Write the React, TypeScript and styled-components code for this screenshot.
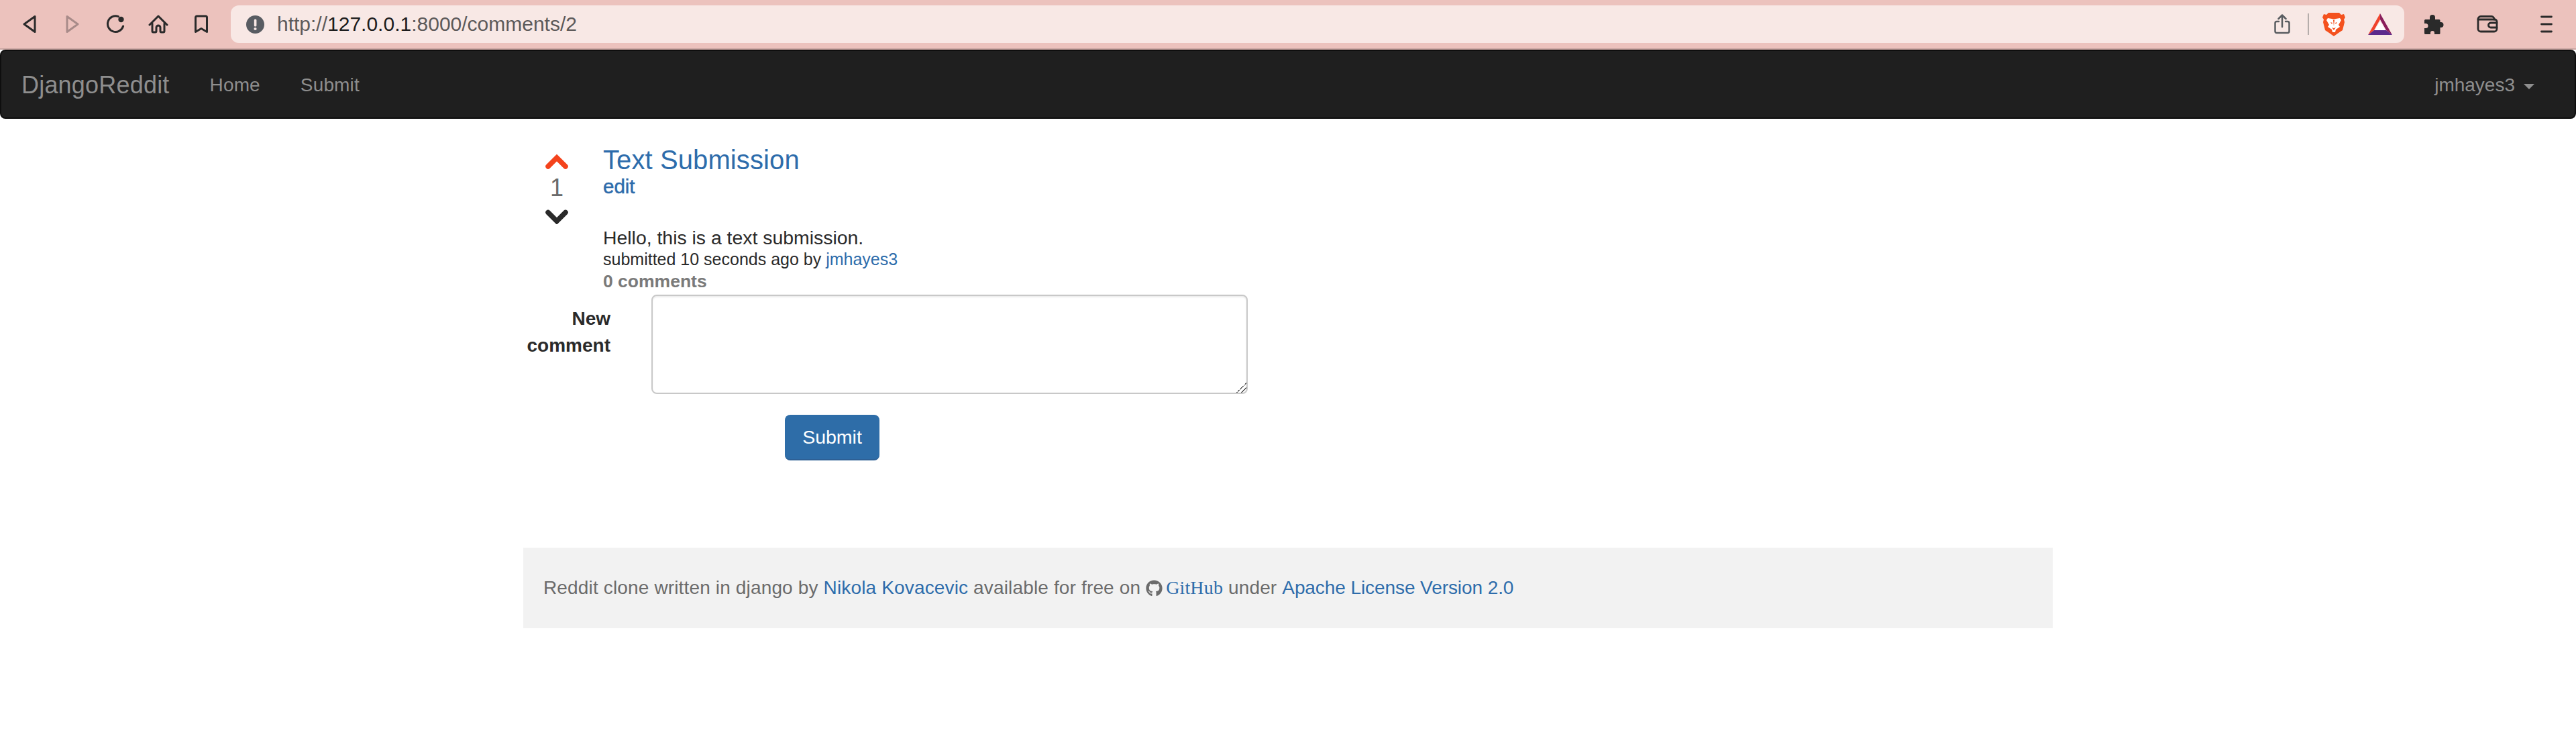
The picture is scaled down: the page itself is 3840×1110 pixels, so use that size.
import React from "react";
import styled, { createGlobalStyle } from "styled-components";
import { FaGithub } from "react-icons/fa";

const colors = {
  chrome: "#ecc2bd",
  chromeEdge: "#c9a5a1",
  address: "#f8e8e5",
  icon: "#2a2a2a",
  navbar: "#1f1f1f",
  navbarEdge: "#0e0e0e",
  navText: "#8e8e8e",
  link: "#2d6cab",
  text: "#2a2a2a",
  muted: "#6b6b6b",
  footer: "#f2f2f2",
};

const GlobalStyle = createGlobalStyle`
  html, body {
    margin: 0;
    padding: 0;
    background: #fff;
    font-family: "Liberation Sans", Arial, sans-serif;
    color: ${colors.text};
  }
`;

const BrowserBar = styled.div`
  height: 72px;
  display: flex;
  align-items: center;
  padding-left: 12px;
  background: ${colors.chrome};
  border-bottom: 2px solid ${colors.chromeEdge};
`;

const ToolButton = styled.div<{ $width?: number }>`
  width: ${(p) => p.$width ?? 64}px;
  height: 56px;
  display: flex;
  align-items: center;
  justify-content: center;
  flex: none;
`;

const AddressBar = styled.div`
  flex: none;
  width: 3240px;
  height: 56px;
  margin-left: 12px;
  margin-right: 4px;
  box-sizing: border-box;
  padding-left: 23px;
  display: flex;
  align-items: center;
  background: ${colors.address};
  border-radius: 12px;
`;

const Url = styled.div`
  margin-left: 19px;
  font-size: 30px;
  color: #5d5a5a;

  b {
    font-weight: 400;
    color: #1d1d1d;
  }
`;

const AddressTools = styled.div`
  margin-left: auto;
  display: flex;
  align-items: center;
`;

const Divider = styled.div`
  width: 2px;
  height: 32px;
  margin: 0 20px 0 26px;
  background: #b5adab;
`;

const Navbar = styled.nav`
  height: 103px;
  box-sizing: border-box;
  display: flex;
  align-items: center;
  padding: 2px 30px 0;
  background: ${colors.navbar};
  border: 2px solid ${colors.navbarEdge};
  border-radius: 8px;
`;

const Brand = styled.a`
  font-size: 36px;
  letter-spacing: 0.2px;
  color: ${colors.navText};
  margin-right: 30px;
`;

const NavLink = styled.a`
  font-size: 28px;
  letter-spacing: 0.15px;
  color: ${colors.navText};
  padding: 0 30px;
`;

const UserMenu = styled.a`
  margin-left: auto;
  padding-right: 30px;
  display: flex;
  align-items: center;
  font-size: 28px;
  color: ${colors.navText};
`;

const Caret = styled.span`
  width: 0;
  height: 0;
  margin-left: 13px;
  margin-top: 4px;
  border-top: 8px solid ${colors.navText};
  border-left: 8px solid transparent;
  border-right: 8px solid transparent;
`;

const Container = styled.main`
  width: 2280px;
  margin: 0 auto;
`;

const Post = styled.section`
  display: flex;
  padding-top: 39px;
`;

const VoteColumn = styled.div`
  width: 100px;
  margin-right: 19px;
  display: flex;
  flex-direction: column;
  align-items: center;
  padding-top: 14px;
`;

const Score = styled.div`
  font-size: 36px;
  line-height: 42px;
  color: ${colors.muted};
  margin: 7px 0 11px;
`;

const PostBody = styled.div`
  flex: 1;
`;

const Title = styled.a`
  display: block;
  font-size: 40px;
  letter-spacing: 0.1px;
  line-height: 44px;
  color: ${colors.link};
`;

const EditLink = styled.a`
  display: block;
  font-size: 29.5px;
  -webkit-text-stroke: 0.5px ${colors.link};
  line-height: 36px;
  margin-bottom: 42px;
  color: ${colors.link};
`;

const BodyText = styled.p`
  margin: 0;
  font-size: 28.4px;
  line-height: 32px;
`;

const Meta = styled.div`
  font-size: 25px;
  line-height: 33px;

  a {
    color: ${colors.link};
  }
`;

const CommentCount = styled.div`
  font-size: 26.5px;
  font-weight: 700;
  line-height: 33px;
  color: #7a7a7a;
`;

const CommentForm = styled.form`
  width: 1080px;
  display: grid;
  grid-template-columns: 130px 1fr;
  column-gap: 61px;
  padding-top: 3px;
`;

const FieldLabel = styled.label`
  font-size: 28px;
  font-weight: 700;
  line-height: 40px;
  text-align: right;
  padding-top: 16px;
`;

const CommentBox = styled.textarea`
  display: block;
  width: 100%;
  height: 148px;
  box-sizing: border-box;
  border: 2px solid #c8c8c8;
  border-radius: 8px;
  box-shadow: inset 0 2px 2px rgba(0, 0, 0, 0.075);
  background: #fff;

  &::-webkit-resizer {
    background: linear-gradient(
      135deg,
      transparent 50%,
      #555 50%,
      #555 56%,
      transparent 56%,
      transparent 72%,
      #555 72%,
      #555 78%,
      transparent 78%
    );
  }
`;

const SubmitButton = styled.button`
  grid-column: 1 / 3;
  justify-self: start;
  margin: 31px 0 0 390px;
  width: 141px;
  height: 68px;
  padding: 0;
  font-family: inherit;
  font-size: 28.5px;
  color: #fff;
  background: #2e6da8;
  border: 2px solid #2e6095;
  border-width: 0 0 2px;
  border-radius: 8px;
`;

const Footer = styled.footer`
  height: 120px;
  margin-top: 130px;
  box-sizing: border-box;
  padding: 0 30px;
  display: flex;
  align-items: center;
  white-space: pre;
  background: ${colors.footer};
  font-size: 28px;
  letter-spacing: 0.15px;
  color: ${colors.muted};

  a {
    color: ${colors.link};
  }

  a:last-child {
    letter-spacing: -0.08px;
  }
`;

const GithubLink = styled.a`
  font-family: "Liberation Serif", "Times New Roman", serif;
  font-size: 28px;
`;

const GithubIcon = styled(FaGithub)`
  width: 25px;
  height: 25px;
  margin-right: 5px;
  color: #6b6b6b;
`;

const strokeIcon = {
  fill: "none",
  stroke: colors.icon,
  strokeWidth: 3,
  strokeLinecap: "round" as const,
  strokeLinejoin: "round" as const,
};

const BackIcon = () => (
  <svg width="20" height="28" viewBox="0 0 20 28" {...strokeIcon}>
    <path d="M18 2.5v23L2 14z" />
  </svg>
);

const ForwardIcon = () => (
  <svg width="20" height="28" viewBox="0 0 20 28" {...strokeIcon} stroke="#a88b89">
    <path d="M2 2.5v23L18 14z" />
  </svg>
);

const ReloadIcon = () => (
  <svg width="28" height="28" viewBox="0 0 28 28" {...strokeIcon}>
    <path d="M18.5 2.6A11.8 11.8 0 1 0 25.6 17" />
    <circle cx="22.5" cy="7" r="4.2" fill={colors.icon} stroke="none" />
  </svg>
);

const HomeIcon = () => (
  <svg width="30" height="28" viewBox="0 0 30 28" {...strokeIcon}>
    <path d="M2 15L15 2l13 13" />
    <path d="M6 13v11.500a1.500 1.500 0 0 0 1.500 1.500h3a1.500 1.500 0 0 0 1.500-1.500V19a3 3 0 0 1 6 0v5.500a1.500 1.500 0 0 0 1.500 1.500h3a1.500 1.500 0 0 0 1.500-1.500V13" />
  </svg>
);

const BookmarkIcon = () => (
  <svg width="22" height="28" viewBox="0 0 22 28" {...strokeIcon}>
    <path d="M2.500 4a2 2 0 0 1 2-2h13a2 2 0 0 1 2 2v21.500L11 20.500l-8.500 5z" />
  </svg>
);

const InfoIcon = () => (
  <svg width="27" height="27" viewBox="0 0 27 27">
    <circle cx="13.500" cy="13.500" r="13.500" fill="#585c62" />
    <rect x="11.800" y="5.500" width="3.600" height="11" rx="1.500" fill="#f8e8e5" />
    <circle cx="13.500" cy="20" r="2.100" fill="#f8e8e5" />
  </svg>
);

const ShareIcon = () => (
  <svg width="24" height="30" viewBox="0 0 24 30" fill="none" stroke="#5a5d61" strokeWidth="2.500" strokeLinecap="round" strokeLinejoin="round">
    <path d="M7 11H4a2.500 2.500 0 0 0-2.500 2.500v12A2.500 2.500 0 0 0 4 28h16a2.500 2.500 0 0 0 2.500-2.500v-12A2.500 2.500 0 0 0 20 11h-3" />
    <path d="M12 19V2M6.500 7L12 1.500 17.500 7" />
  </svg>
);

const BraveIcon = () => (
  <svg width="34" height="36" viewBox="0 0 34 36">
    <path d="M9 1h16l3 3 4-1 2 5-2 3 1 4-3 12-6 4-7 5-7-5-6-4L1 15l1-4-2-3 2-5 4 1z" fill="#f4511e" />
    <path d="M8 9l6 1 3 1 3-1 6-1 2 3-4 7 2 3-6 4-1 4h-4l-1-4-6-4 2-3-4-7z" fill="#fff" />
    <path d="M12 15l3 1-1 2zM22 15l-3 1 1 2zM14 23l3 1 3-1-3 4zM16 12h2l-1 9z" fill="#f4511e" />
  </svg>
);

const BatIcon = () => (
  <svg width="36" height="32" viewBox="0 0 36 32">
    <path d="M18 0L36 32 27 25 18 9z" fill="#8a1f5c" />
    <path d="M18 0L0 32 9 25 18 9z" fill="#f0432d" />
    <path d="M18 12L26 25H10z" fill="#fff" />
    <path d="M9 25h18l9 7H0z" fill="#5b2a8c" />
  </svg>
);

const PuzzleIcon = () => (
  <svg width="30" height="30" viewBox="0 0 30 30">
    <path d="M13 1a4 4 0 0 1 4 4v3h6a1.500 1.500 0 0 1 1.500 1.500V12h1a4 4 0 0 1 0 8h-1v8.500a1.500 1.500 0 0 1-1.500 1.500h-7v-2a3 3 0 0 0-6 0v2H2.500A1.500 1.500 0 0 1 1 28.500V21h2a3.500 3.500 0 0 0 0-7H1V9.500A1.500 1.500 0 0 1 2.500 8H9V5a4 4 0 0 1 4-4z" fill={colors.icon} />
  </svg>
);

const WalletIcon = () => (
  <svg width="32" height="26" viewBox="0 0 32 26" fill="none" stroke={colors.icon} strokeWidth="2.800" strokeLinecap="round" strokeLinejoin="round">
    <path d="M2 6V20a4 4 0 0 0 4 4H26a4 4 0 0 0 4-4V9a3 3 0 0 0-3-3H2z" />
    <path d="M2 6a4 4 0 0 1 4-4.500H22a4 4 0 0 1 4 4.500" />
    <path d="M30 11H21a3.500 3.500 0 0 0 0 7h9" />
  </svg>
);

const MenuIcon = () => (
  <svg width="18" height="26" viewBox="0 0 18 26" stroke={colors.icon} strokeWidth="2.800" strokeLinecap="round">
    <path d="M1.500 2h15M1.500 13h15M1.500 24h15" />
  </svg>
);

const VoteArrow = styled.svg`
  display: block;
  width: 34px;
  height: 22px;
`;

const UpArrow = () => (
  <VoteArrow viewBox="0 0 34 22">
    <path d="M4 18L17 5l13 13" fill="none" stroke="#f4431c" strokeWidth="7.500" strokeLinecap="round" strokeLinejoin="miter" />
  </VoteArrow>
);

const DownArrow = () => (
  <VoteArrow viewBox="0 0 34 22">
    <path d="M4 4.500L17 17.500 30 4.500" fill="none" stroke="#2a2a2a" strokeWidth="7.500" strokeLinecap="round" strokeLinejoin="miter" />
  </VoteArrow>
);

export default function App() {
  return (
    <>
      <GlobalStyle />
      <BrowserBar>
        <ToolButton><BackIcon /></ToolButton>
        <ToolButton><ForwardIcon /></ToolButton>
        <ToolButton><ReloadIcon /></ToolButton>
        <ToolButton><HomeIcon /></ToolButton>
        <ToolButton><BookmarkIcon /></ToolButton>
        <AddressBar>
          <InfoIcon />
          <Url>http://<b>127.0.0.1</b>:8000/comments/2</Url>
          <AddressTools>
            <ShareIcon />
            <Divider />
            <BraveIcon />
            <ToolButton $width={34} />
            <BatIcon />
            <ToolButton $width={18} />
          </AddressTools>
        </AddressBar>
        <ToolButton $width={80}><PuzzleIcon /></ToolButton>
        <ToolButton $width={80}><WalletIcon /></ToolButton>
        <ToolButton $width={96}><MenuIcon /></ToolButton>
      </BrowserBar>
      <Navbar>
        <Brand>DjangoReddit</Brand>
        <NavLink>Home</NavLink>
        <NavLink>Submit</NavLink>
        <UserMenu>jmhayes3<Caret /></UserMenu>
      </Navbar>
      <Container>
        <Post>
          <VoteColumn>
            <UpArrow />
            <Score>1</Score>
            <DownArrow />
          </VoteColumn>
          <PostBody>
            <Title>Text Submission</Title>
            <EditLink>edit</EditLink>
            <BodyText>Hello, this is a text submission.</BodyText>
            <Meta>submitted 10 seconds ago by <a>jmhayes3</a></Meta>
            <CommentCount>0 comments</CommentCount>
          </PostBody>
        </Post>
        <CommentForm>
          <FieldLabel>New comment</FieldLabel>
          <CommentBox />
          <SubmitButton type="button">Submit</SubmitButton>
        </CommentForm>
        <Footer>
          Reddit clone written in django by <a>Nikola Kovacevic</a> available for free on <GithubIcon /><GithubLink as="a">GitHub</GithubLink> under <a>Apache License Version 2.0</a>
        </Footer>
      </Container>
    </>
  );
}
